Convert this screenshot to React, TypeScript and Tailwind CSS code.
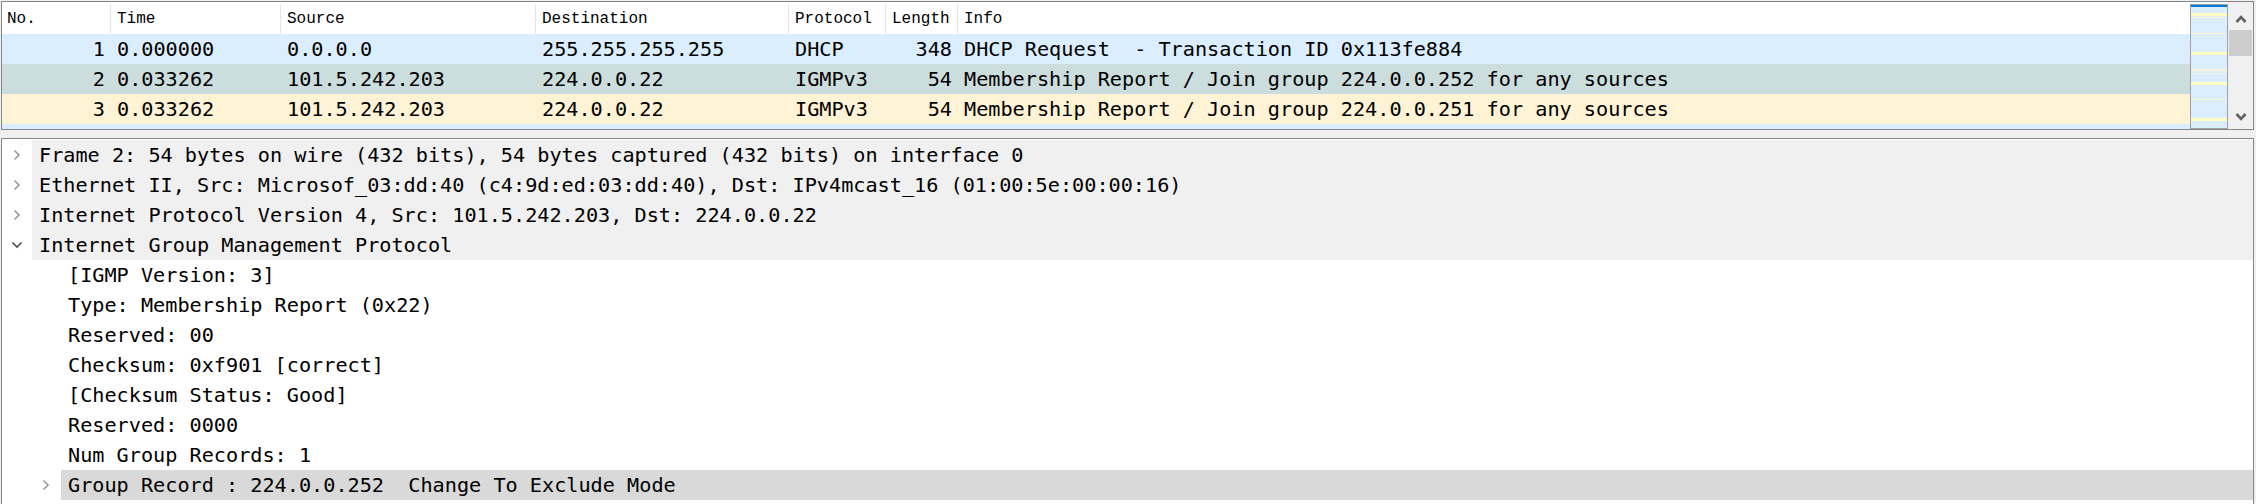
import React from 'react';

type Packet = {
  no: string;
  time: string;
  src: string;
  dst: string;
  proto: string;
  len: string;
  info: string;
  bg: string;
};

// packet list rows, colour per Wireshark colouring rule
const PACKETS: Packet[] = [
  { no: '1', time: '0.000000', src: '0.0.0.0', dst: '255.255.255.255', proto: 'DHCP', len: '348', info: 'DHCP Request  - Transaction ID 0x113fe884', bg: 'bg-[#daeeff]' },
  { no: '2', time: '0.033262', src: '101.5.242.203', dst: '224.0.0.22', proto: 'IGMPv3', len: '54', info: 'Membership Report / Join group 224.0.0.252 for any sources', bg: 'bg-[#ccdddd]' },
  { no: '3', time: '0.033262', src: '101.5.242.203', dst: '224.0.0.22', proto: 'IGMPv3', len: '54', info: 'Membership Report / Join group 224.0.0.251 for any sources', bg: 'bg-[#fff3d6]' },
  { no: '4', time: '0.034117', src: '101.5.242.203', dst: '224.0.0.252', proto: 'LLMNR', len: '64', info: 'Standard query 0x8f7c A wpad', bg: 'bg-[#daeeff]' },
];

type Node = { text: string; level: 0 | 1; arrow?: 'closed' | 'open'; selected?: boolean };

const TREE: Node[] = [
  { text: 'Frame 2: 54 bytes on wire (432 bits), 54 bytes captured (432 bits) on interface 0', level: 0, arrow: 'closed' },
  { text: 'Ethernet II, Src: Microsof_03:dd:40 (c4:9d:ed:03:dd:40), Dst: IPv4mcast_16 (01:00:5e:00:00:16)', level: 0, arrow: 'closed' },
  { text: 'Internet Protocol Version 4, Src: 101.5.242.203, Dst: 224.0.0.22', level: 0, arrow: 'closed' },
  { text: 'Internet Group Management Protocol', level: 0, arrow: 'open' },
  { text: '[IGMP Version: 3]', level: 1 },
  { text: 'Type: Membership Report (0x22)', level: 1 },
  { text: 'Reserved: 00', level: 1 },
  { text: 'Checksum: 0xf901 [correct]', level: 1 },
  { text: '[Checksum Status: Good]', level: 1 },
  { text: 'Reserved: 0000', level: 1 },
  { text: 'Num Group Records: 1', level: 1 },
  { text: 'Group Record : 224.0.0.252  Change To Exclude Mode', level: 1, arrow: 'closed', selected: true },
];

// minimap marks: [offset from top, height, colour]
const MARKS: [number, number, string][] = [
  [9, 3, '#ffffc4'],
  [13, 1, '#fdf3d2'],
  [29, 1, '#fdf3d2'],
  [48, 3, '#ffffc4'],
  [65, 2, '#fdf3d2'],
  [69, 1, '#f4f4e8'],
  [78, 3, '#ffffc4'],
  [95, 1, '#fdf3d2'],
  [114, 3, '#ffffc4'],
];

const mono = "font-['DejaVu_Sans_Mono',monospace] text-[20.2px] text-black";

const Chevron = ({ open }: { open: boolean }) =>
  open ? (
    <svg width="12" height="8" viewBox="0 0 12 8">
      <polyline points="1.5,1.5 6,6 10.5,1.5" fill="none" stroke="#4a4a4a" strokeWidth="1.6" />
    </svg>
  ) : (
    <svg width="8" height="12" viewBox="0 0 8 12">
      <polyline points="1.5,1.5 6,6 1.5,10.5" fill="none" stroke="#9a9a9a" strokeWidth="1.6" />
    </svg>
  );

const ScrollArrow = ({ up }: { up: boolean }) => (
  <svg width="12" height="8" viewBox="0 0 12 8">
    <polyline
      points={up ? '1.5,7 6,2.2 10.5,7' : '1.5,1 6,5.8 10.5,1'}
      fill="none"
      stroke="#606060"
      strokeWidth="2.6"
    />
  </svg>
);

const Minimap = () => (
  <div className="mt-[2px] w-[38px] self-stretch">
    <svg width="38" height="126" viewBox="0 0 38 126">
      <rect x="0.5" y="0.5" width="37" height="124" fill="#daeeff" stroke="#a0a0a0" />
      <rect x="1" y="1" width="36" height="2" fill="#0078d7" />
      {MARKS.map(([y, h, c], i) => (
        <rect key={i} x="1" y={y} width="36" height={h} fill={c} />
      ))}
    </svg>
  </div>
);

export default function App() {
  return (
    <div className="w-[2256px] h-[504px] overflow-hidden bg-[#f0f0f0] pt-[1px] pl-[1px]">
      {/* packet list */}
      <div className="w-[2253px] h-[129px] border border-[#828790] bg-white flex">
        <div className="flex-1 min-w-0 flex flex-col overflow-hidden">
          <div className="h-[32px] shrink-0 pt-[2px] flex font-['Liberation_Mono',monospace] text-[16px] text-black">
            <div className="w-[109px] border-r border-[#e5e5e5] pl-[5px] flex items-center">No.</div>
            <div className="w-[170px] border-r border-[#e5e5e5] pl-[6px] flex items-center">Time</div>
            <div className="w-[255px] border-r border-[#e5e5e5] pl-[6px] flex items-center">Source</div>
            <div className="w-[253px] border-r border-[#e5e5e5] pl-[6px] flex items-center">Destination</div>
            <div className="w-[97px] border-r border-[#e5e5e5] pl-[6px] flex items-center">Protocol</div>
            <div className="w-[72px] border-r border-[#e5e5e5] pl-[6px] flex items-center">Length</div>
            <div className="flex-1 pl-[6px] flex items-center">Info</div>
          </div>
          {PACKETS.map((p) => (
            <div key={p.no} className={`h-[30px] shrink-0 flex items-center whitespace-pre ${p.bg} ${mono}`}>
              <div className="w-[109px] pr-[6px] text-right">{p.no}</div>
              <div className="w-[170px] pl-[6px]">{p.time}</div>
              <div className="w-[255px] pl-[6px]">{p.src}</div>
              <div className="w-[253px] pl-[6px]">{p.dst}</div>
              <div className="w-[97px] pl-[6px]">{p.proto}</div>
              <div className="w-[72px] pr-[6px] text-right">{p.len}</div>
              <div className="flex-1 pl-[6px]">{p.info}</div>
            </div>
          ))}
        </div>
        <Minimap />
        <div className="w-[25px] bg-[#f0f0f0] flex flex-col">
          <div className="h-[28px] pt-[6px] flex items-center justify-center">
            <ScrollArrow up />
          </div>
          <div className="h-[26px] mx-[1px] bg-[#cdcdcd]" />
          <div className="flex-1" />
          <div className="h-[24px] flex items-center justify-center">
            <ScrollArrow up={false} />
          </div>
        </div>
      </div>

      {/* packet details */}
      <div className="mt-[8px] w-[2253px] h-[380px] border border-[#828790] bg-white pt-[1px] overflow-hidden">
        {TREE.map((n, i) => (
          <div key={i} className={`h-[30px] flex ${mono}`}>
            {n.level === 1 && <div className="w-[29px] shrink-0" />}
            <div className="w-[30px] shrink-0 flex items-center justify-center">
              {n.arrow && <Chevron open={n.arrow === 'open'} />}
            </div>
            <div
              className={`flex-1 pl-[7px] flex items-center whitespace-pre ${
                n.selected ? 'bg-[#d9d9d9]' : n.level === 0 ? 'bg-[#f0f0f0]' : 'bg-white'
              }`}
            >
              {n.text}
            </div>
          </div>
        ))}
      </div>
    </div>
  );
}
